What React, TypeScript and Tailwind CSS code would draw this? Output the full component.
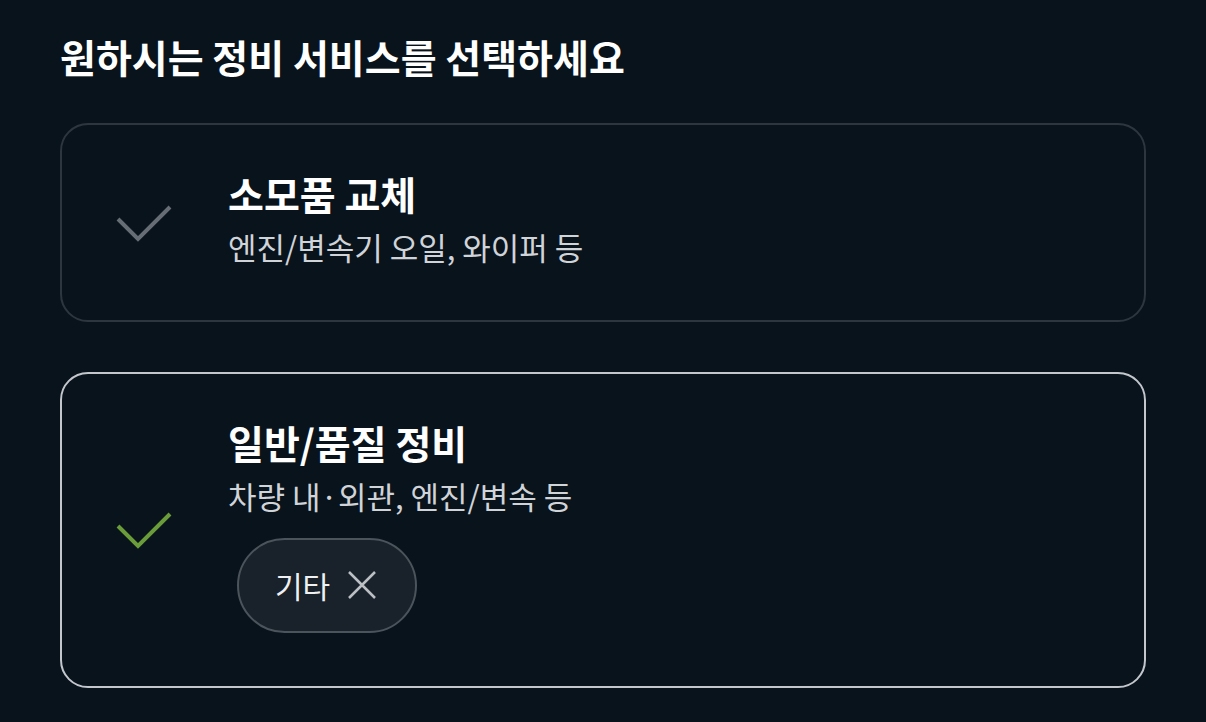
function Check({ active }: { active: boolean }) {
  return (
    <svg width="56" height="40" viewBox="0 0 56 40" className="flex-shrink-0">
      <polyline
        points="2,16 22,36 54,4"
        fill="none"
        stroke={active ? "#6a9c3a" : "#666d74"}
        strokeWidth="4"
      />
    </svg>
  );
}

export default function App() {
  return (
    <div className="w-full h-[722px] bg-[#09131c] px-[60px] pt-[30px] font-['Noto_Sans_CJK_KR','Noto_Sans',sans-serif] overflow-hidden">
      <h1 className="text-[39px] font-bold leading-[52px] text-white">
        원하시는 정비 서비스를 선택하세요
      </h1>

      <div className="mt-[41px] flex flex-col gap-[50px]">
        {/* 소모품 교체 */}
        <div className="h-[199px] border-2 border-[#2d363f] rounded-[28px] pl-[54px] flex items-center">
          <Check active={false} />
          <div className="ml-[56px] pb-[12px]">
            <h3 className="text-[39px] font-bold leading-[52px] text-white">
              소모품 교체
            </h3>
            <p className="mt-[8px] text-[31px] leading-[40px] text-[#d0d4d9]">
              엔진/변속기 오일, 와이퍼 등
            </p>
          </div>
        </div>

        {/* 일반/품질 정비 */}
        <div className="h-[316px] border-2 border-[#c3c7cc] rounded-[28px] pl-[54px] flex items-center">
          <Check active={true} />
          <div className="ml-[56px] pb-[12px]">
            <h3 className="text-[39px] font-bold leading-[52px] text-white">
              일반/품질 정비
            </h3>
            <p className="mt-[8px] text-[31px] leading-[40px] text-[#d0d4d9]">
              차량 내·외관, 엔진/변속 등
            </p>
            <div className="mt-[22px] ml-[9px] inline-flex items-center h-[95px] pl-[36px] pr-[39px] gap-[18px] rounded-full bg-[#19212a] border-2 border-[#4b535b]">
              <span className="text-[30px] leading-[40px] text-[#eef0f2]">기타</span>
              <svg width="28" height="28" viewBox="0 0 28 28" className="flex-shrink-0">
                <path d="M1 1 L27 27 M27 1 L1 27" stroke="#bcc0c5" strokeWidth="2.5" fill="none" />
              </svg>
            </div>
          </div>
        </div>
      </div>
    </div>
  );
}
